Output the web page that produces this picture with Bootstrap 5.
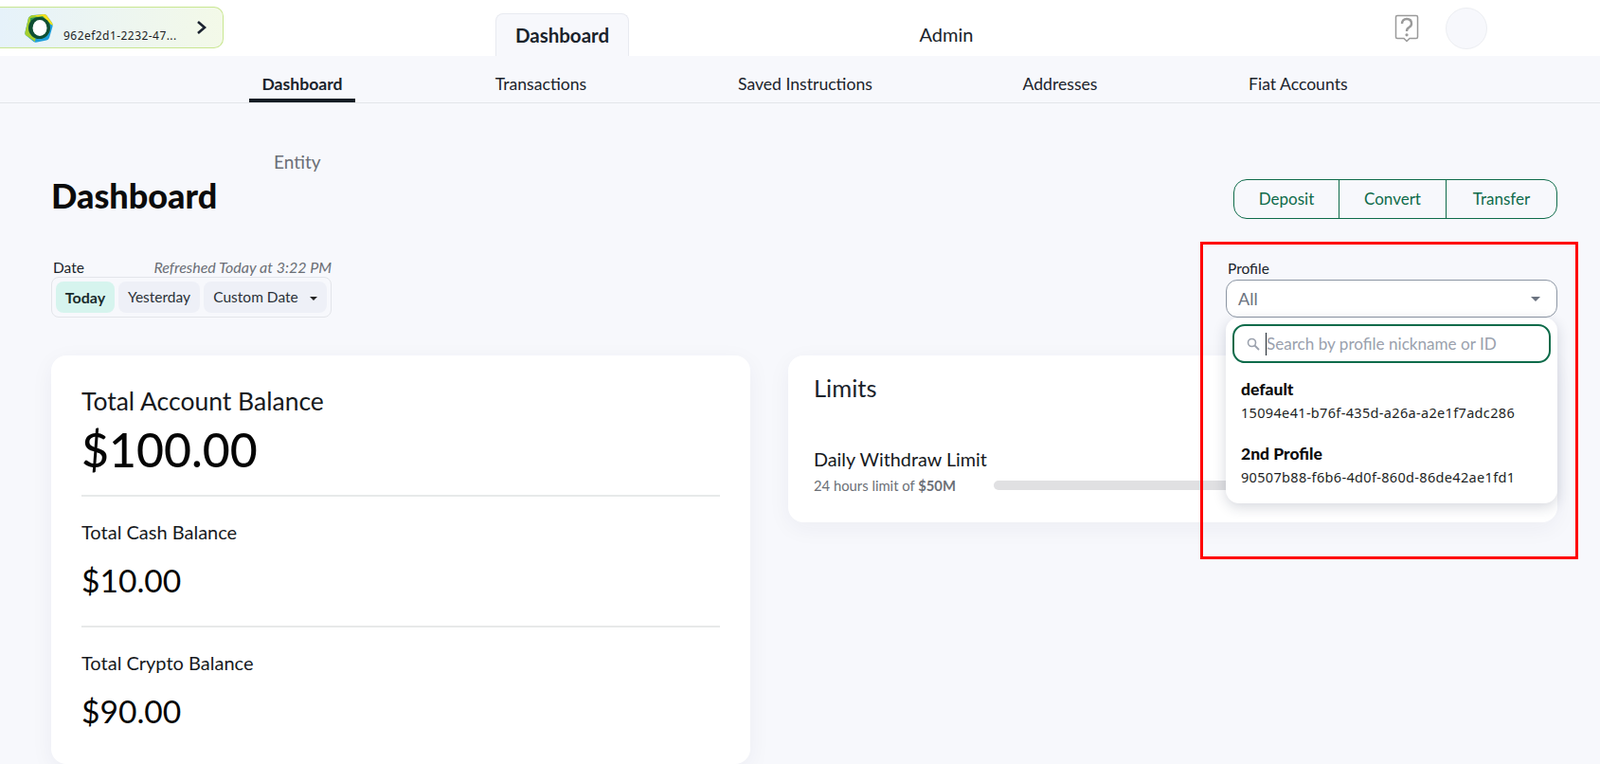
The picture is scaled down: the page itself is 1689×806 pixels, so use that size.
<!DOCTYPE html>
<html lang="en">
<head>
    <meta charset="UTF-8">
    <meta name="viewport" content="width=device-width, initial-scale=1.0">
    <title>Dashboard</title>
    <link href="https://cdn.jsdelivr.net/npm/bootstrap@5.3.0/dist/css/bootstrap.min.css" rel="stylesheet">
    <style>
        html, body { height: 100%; overflow: hidden; }
        body {
            background: #f7f8fc;
            font-family: "Lato", "Liberation Sans", sans-serif;
            color: #1a232b;
            position: relative;
        }
        /* top bar */
        .top-strip { background: #fff; height: 59px; }
        .acct-pill {
            width: 236px; height: 44px; margin-top: 7px;
            border: 1px solid #c8e690; border-left: 0;
            border-radius: 0 10px 10px 0;
            background: linear-gradient(90deg, #e6f2fa, #f3f9e8);
            padding-left: 25px; padding-right: 16px;
        }
        .acct-id { font-family: "Noto Sans", sans-serif; font-size: 12px; letter-spacing: .45px; margin-top: 22px; margin-left: 10px; color: #1d1f24; line-height: 16px; }
        .logo-mark { margin-top: 6px; }
        .tab-zone { margin-left: 287px; }
        .tab-on {
            width: 141px; height: 45px; margin-top: 14px;
            background: #f7f8fc; border: 1px solid #e8eaf0; border-bottom: 0;
            border-radius: 8px 8px 0 0;
            font-size: 20.5px; font-weight: 700; color: #1a232b;
        }
        .tab-off { width: 142px; margin-left: 264px; margin-top: 12px; font-size: 20px; color: #1a232b; }
        .top-right { margin-left: auto; margin-right: 119px; gap: 28px; }
        .avatar-dot { width: 44px; height: 44px; border-radius: 50%; background: #f7f8fc; border: 1px solid #eceef2; }
        /* sub nav */
        .sub-strip { height: 50px; border-bottom: 1px solid #e3e5ea; padding-left: 263px; }
        .sub-link { font-size: 17.6px; color: #1a232b; height: 49px; line-height: 59px; padding: 0; text-align: center; white-space: nowrap; }
        .sub-on { width: 112px; font-weight: 700; border-bottom: 4px solid #141c24; }
        .sub-t1 { margin-left: 147px; width: 98px; }
        .sub-t2 { margin-left: 159px; width: 141px; }
        .sub-t3 { margin-left: 159px; width: 80px; }
        .sub-t4 { margin-left: 159px; width: 104px; }
        /* header */
        .page-pad { padding: 0 45px 0 54px; }
        .entity-name { font-size: 19px; color: #6b6f76; margin: 50px 0 0 235px; line-height: 24px; }
        .page-title { font-size: 36px; font-weight: 900; color: #0c0c0c; margin: 3px 0 0; line-height: 40px; }
        .action-group { width: 342px; height: 42px; margin-top: 80px; }
        .action-group .btn {
            border-color: #0e6b4a; color: #0e6b4a; font-size: 17px; background: transparent;
            border-radius: 14px; padding: 0;
        }
        .action-group .btn:nth-child(1) { flex: 0 0 112px; }
        .action-group .btn:nth-child(2) { flex: 0 0 114px; }
        .date-head { width: 296px; font-size: 15.5px; margin-top: 41px; line-height: 20px; padding-left: 2px; }
        .date-note { font-style: italic; color: #6b6f76; font-size: 16px; }
        .date-pills { width: 296px; height: 43px; border: 1px solid #e3e5ea; border-radius: 8px; padding: 4px; gap: 4px; }
        .date-btn {
            background: #eef0f7; border: 0; border-radius: 8px; font-size: 15.5px; color: #2a3138;
            height: 33px; padding: 0;
        }
        .date-today { width: 62px; background: #d6f4ee; font-weight: 700; font-size: 16px; color: #1a2b2b; }
        .date-yest { width: 86px; }
        .date-custom { width: 130px; }
        .mini-caret { display: inline-block; border: 4px solid transparent; border-top-color: #222; border-bottom: 0; margin-left: 12px; vertical-align: middle; }
        .profile-box { width: 350px; margin-top: 42px; }
        .profile-label { font-size: 15.5px; line-height: 20px; margin: 0 0 2px 2px; color: #1a232b; }
        .profile-select {
            height: 40px; background: #fff; border: 1px solid #8b95a3; border-radius: 12px;
            font-size: 18px; color: #6b7380; padding: 0 17px 0 12px;
        }
        .select-caret { display: block; border: 5px solid transparent; border-top-color: #6b7380; border-bottom: 0; }
        /* cards */
        .panel-row { gap: 40px; margin-top: 40px; }
        .panel-left { width: 738px; height: 431px; border: 0; border-radius: 16px; padding: 30px 32px; box-shadow: 0 6px 24px rgba(30, 40, 70, .05); }
        .panel-right { width: 812px; height: 176px; border: 0; border-radius: 16px; padding: 18px 27px; box-shadow: 0 6px 24px rgba(30, 40, 70, .05); }
        .bal-main { font-size: 26.5px; line-height: 36px; color: #16191d; }
        .bal-big { font-size: 50px; line-height: 66px; font-weight: 500; color: #050505; }
        .bal-sub { font-size: 20px; line-height: 28px; color: #16191d; }
        .bal-mid { font-size: 33.6px; line-height: 44px; color: #050505; margin-top: 15px; }
        .bal-rule { border: 0; border-top: 2px solid #e7e9e9; opacity: 1; margin: 15px 0 23px; }
        .bal-rule-b { margin-top: 26px; }
        .limits-title { font-size: 25.5px; line-height: 32px; margin-bottom: 45px; }
        .limit-name { font-size: 19.8px; line-height: 28px; color: #16191d; }
        .limit-row { margin-top: 4px; }
        .limit-note { font-size: 14.8px; line-height: 20px; color: #6b6f76; white-space: nowrap; }
        .limit-track { height: 10px; border-radius: 5px; background: #e0e0e2; margin-left: 40px; }
        /* dropdown over the content */
        .profile-menu {
            position: absolute; left: 1294px; top: 335px; width: 350px; height: 196px;
            background: #fff; border-radius: 14px; box-shadow: 0 4px 14px rgba(30, 40, 70, .18);
            padding: 7px;
        }
        .search-wrap {
            height: 41px; border: 2px solid #0e6b4a; border-radius: 13px; padding-left: 13px; gap: 6px;
        }
        .search-field { border: 0; outline: 0; padding: 0; height: 24px; flex: 1; font-size: 17.1px; border-left: 1px solid #1a232b; background: transparent; }
        .search-field::placeholder { color: #9aa1ad; }
        .menu-item { padding-left: 9px; margin-top: 18px; }
        .menu-item + .menu-item { margin-top: 24px; }
        .menu-name { font-size: 17.5px; font-weight: 900; color: #0c0c0c; line-height: 20px; }
        .menu-id { font-family: "Noto Sans", sans-serif; font-size: 14.5px; letter-spacing: .33px; color: #1d1f24; line-height: 20px; margin-top: 4px; white-space: nowrap; }
        .red-frame { position: absolute; left: 1267px; top: 255px; width: 399px; height: 335px; border: 3px solid #f00; pointer-events: none; }
    </style>
</head>
<body>
    <!-- top bar -->
    <div class="top-strip d-flex">
        <div class="acct-pill d-flex align-items-start justify-content-between">
            <div class="d-flex align-items-start">
                <svg class="logo-mark" width="32" height="31" viewBox="0 0 32 31">
                    <path d="M7 3 Q8 2 10 2 L21 1 Q23 1 24 2 L30 10 Q31 12 30.500 14 L27 26 Q26 28 24 28.500 L14 30.500 Q12 31 10.500 30 L2 23 Q1 22 1.500 20 L5 5 Q5.500 4 7 3 Z" fill="#1f9fdc"/>
                    <path d="M7 3 Q8 2 10 2 L16 2 L12 30 L2 23 Q1 22 1.500 20 L5 5 Q5.500 4 7 3 Z" fill="#a6cf2e"/>
                    <path d="M12 2 L21 1 Q23 1 24 2 L30 10 L31 13 L22 8 Z" fill="#f5e11c"/>
                    <path d="M7 5 L20 3 L28 11 L21 24 L8 21 Z" fill="#2f9a50"/>
                    <circle cx="16.500" cy="15.500" r="11.500" fill="#0f4f33"/>
                    <ellipse cx="17" cy="15.500" rx="7.500" ry="8.500" fill="#fff"/>
                </svg>
                <div class="acct-id">962ef2d1-2232-47...</div>
            </div>
            <svg width="12" height="16" viewBox="0 0 12 16" class="align-self-center"><path d="M2 2 L9 8 L2 14" fill="none" stroke="#1b2330" stroke-width="2.6"/></svg>
        </div>
        <div class="tab-zone d-flex">
            <div class="tab-on d-flex align-items-center justify-content-center">Dashboard</div>
            <div class="tab-off d-flex align-items-center justify-content-center">Admin</div>
        </div>
        <div class="top-right d-flex align-items-center">
            <svg width="26" height="30" viewBox="0 0 26 30">
                <path d="M3 1.500 H23 Q24.500 1.500 24.500 3 V24 Q24.500 25.500 23 25.500 H16 L13 28.500 L10 25.500 H3 Q1.500 25.500 1.500 24 V3 Q1.500 1.500 3 1.500 Z" fill="none" stroke="#9a9a9a" stroke-width="1.500"/>
                <path d="M8 10 Q8 5 13 5 Q18 5 18 10 Q18 12.500 15.500 13.800 Q13 15 13 18" fill="none" stroke="#9a9a9a" stroke-width="2.400"/>
                <circle cx="13" cy="21.800" r="1.600" fill="#9a9a9a"/>
            </svg>
            <div class="avatar-dot"></div>
        </div>
    </div>

    <!-- sub nav -->
    <nav class="sub-strip nav">
        <a class="sub-link sub-on text-decoration-none">Dashboard</a>
        <a class="sub-link text-decoration-none sub-t1">Transactions</a>
        <a class="sub-link text-decoration-none sub-t2">Saved Instructions</a>
        <a class="sub-link text-decoration-none sub-t3">Addresses</a>
        <a class="sub-link text-decoration-none sub-t4">Fiat Accounts</a>
    </nav>

    <div class="page-pad">
        <div class="d-flex justify-content-between align-items-start">
            <div>
                <div class="entity-name">Entity</div>
                <h1 class="page-title">Dashboard</h1>
            </div>
            <div class="btn-group action-group">
                <button class="btn">Deposit</button>
                <button class="btn">Convert</button>
                <button class="btn">Transfer</button>
            </div>
        </div>

        <div class="d-flex justify-content-between align-items-start">
            <div>
                <div class="date-head d-flex justify-content-between">
                    <span>Date</span>
                    <span class="date-note">Refreshed Today at 3:22 PM</span>
                </div>
                <div class="date-pills d-flex">
                    <button class="date-btn date-today">Today</button>
                    <button class="date-btn date-yest">Yesterday</button>
                    <button class="date-btn date-custom">Custom Date<i class="mini-caret"></i></button>
                </div>
            </div>
            <div class="profile-box">
                <div class="profile-label">Profile</div>
                <div class="profile-select d-flex align-items-center justify-content-between">
                    <span>All</span><i class="select-caret"></i>
                </div>
            </div>
        </div>

        <div class="panel-row d-flex align-items-start">
            <div class="card panel-left">
                <div class="bal-main">Total Account Balance</div>
                <div class="bal-big">$100.00</div>
                <hr class="bal-rule">
                <div class="bal-sub">Total Cash Balance</div>
                <div class="bal-mid">$10.00</div>
                <hr class="bal-rule bal-rule-b">
                <div class="bal-sub">Total Crypto Balance</div>
                <div class="bal-mid">$90.00</div>
            </div>
            <div class="card panel-right">
                <div class="limits-title">Limits</div>
                <div class="limit-name">Daily Withdraw Limit</div>
                <div class="limit-row d-flex align-items-center">
                    <span class="limit-note">24 hours limit of <b>$50M</b></span>
                    <div class="limit-track flex-grow-1"></div>
                </div>
            </div>
        </div>
    </div>

    <!-- open profile dropdown -->
    <div class="profile-menu">
        <div class="search-wrap d-flex align-items-center">
            <svg width="14" height="14" viewBox="0 0 14 14"><circle cx="5.500" cy="5.500" r="4" fill="none" stroke="#9aa1ad" stroke-width="1.600"/><path d="M8.500 8.500 L13 13" stroke="#9aa1ad" stroke-width="1.800"/></svg>
            <input class="search-field" type="text" placeholder="Search by profile nickname or ID">
        </div>
        <div class="menu-item">
            <div class="menu-name">default</div>
            <div class="menu-id">15094e41-b76f-435d-a26a-a2e1f7adc286</div>
        </div>
        <div class="menu-item">
            <div class="menu-name">2nd Profile</div>
            <div class="menu-id">90507b88-f6b6-4d0f-860d-86de42ae1fd1</div>
        </div>
    </div>
    <div class="red-frame"></div>

    <script src="https://cdn.jsdelivr.net/npm/bootstrap@5.3.0/dist/js/bootstrap.bundle.min.js"></script>
</body>
</html>
